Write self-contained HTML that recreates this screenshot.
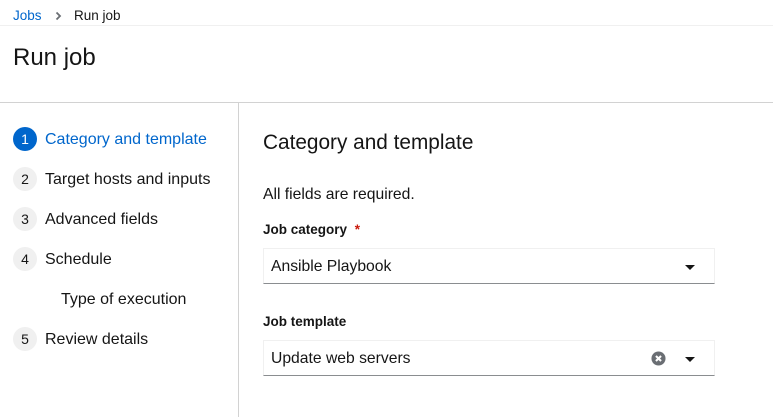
<!DOCTYPE html>
<html><head><style>
*{margin:0;padding:0;box-sizing:border-box}
body{width:773px;height:417px;overflow:hidden;background:#fff;font-family:"Liberation Sans",sans-serif;color:#151515;position:relative}
.a{position:absolute;white-space:nowrap}
.c{position:absolute;left:13px;width:24px;height:24px;border-radius:50%;background:#f0f0f0;color:#151515;font-size:14px;text-align:center;line-height:24px}
.st{position:absolute;left:45px;font-size:16px;line-height:20px}
.sel{position:absolute;left:263px;width:452px;height:36px;border:1px solid #f0f0f0;border-bottom:1px solid #8a8d90;font-size:15.7px;line-height:36px;padding-left:7px}
.car{position:absolute;right:19px;top:16px;width:0;height:0;border-left:5px solid transparent;border-right:5px solid transparent;border-top:5px solid #151515}
.lab{position:absolute;left:263px;font-size:13.5px;font-weight:bold;color:#151515}
</style></head><body>
<div class="a" style="left:13px;top:8px;font-size:13.5px;color:#0066cc">Jobs</div>
<svg class="a" style="left:55px;top:11px" width="7" height="10" viewBox="0 0 7 10"><path d="M1.5 1.5L5 5L1.5 8.5" stroke="#6a6e73" stroke-width="1.8" fill="none"/></svg>
<div class="a" style="left:74px;top:8px;font-size:13.5px;color:#151515">Run job</div>
<div class="a" style="left:0;top:25px;width:773px;height:1px;background:#f0f0f0"></div>
<div class="a" style="left:13px;top:44px;font-size:24px">Run job</div>
<div class="a" style="left:0;top:102px;width:773px;height:1px;background:#d2d2d2"></div>
<div class="a" style="left:238px;top:103px;width:1px;height:314px;background:#d2d2d2"></div>

<div class="c" style="top:127px;background:#0066cc;color:#fff">1</div>
<div class="st" style="top:130px;color:#0066cc">Category and template</div>
<div class="c" style="top:167px">2</div>
<div class="st" style="top:170px">Target hosts and inputs</div>
<div class="c" style="top:207px">3</div>
<div class="st" style="top:210px">Advanced fields</div>
<div class="c" style="top:247px">4</div>
<div class="st" style="top:250px">Schedule</div>
<div class="st" style="top:290px;left:61px">Type of execution</div>
<div class="c" style="top:327px">5</div>
<div class="st" style="top:330px">Review details</div>

<div class="a" style="left:263px;top:131px;font-size:20.8px;color:#151515">Category and template</div>
<div class="a" style="left:263px;top:186px;font-size:15.7px">All fields are required.</div>
<div class="lab" style="top:222px">Job category <span style="color:#c9190b;margin-left:4px">*</span></div>
<div class="sel" style="top:248px">Ansible Playbook<div class="car"></div></div>
<div class="lab" style="top:314px">Job template</div>
<div class="sel" style="top:340px">Update web servers
<svg style="position:absolute;right:48px;top:10px" width="15" height="15" viewBox="0 0 16 16"><circle cx="8" cy="8" r="7.5" fill="#6a6e73"/><path d="M5.3 5.3L10.7 10.7M10.7 5.3L5.3 10.7" stroke="#fff" stroke-width="2.2"/></svg>
<div class="car"></div></div>
</body></html>
